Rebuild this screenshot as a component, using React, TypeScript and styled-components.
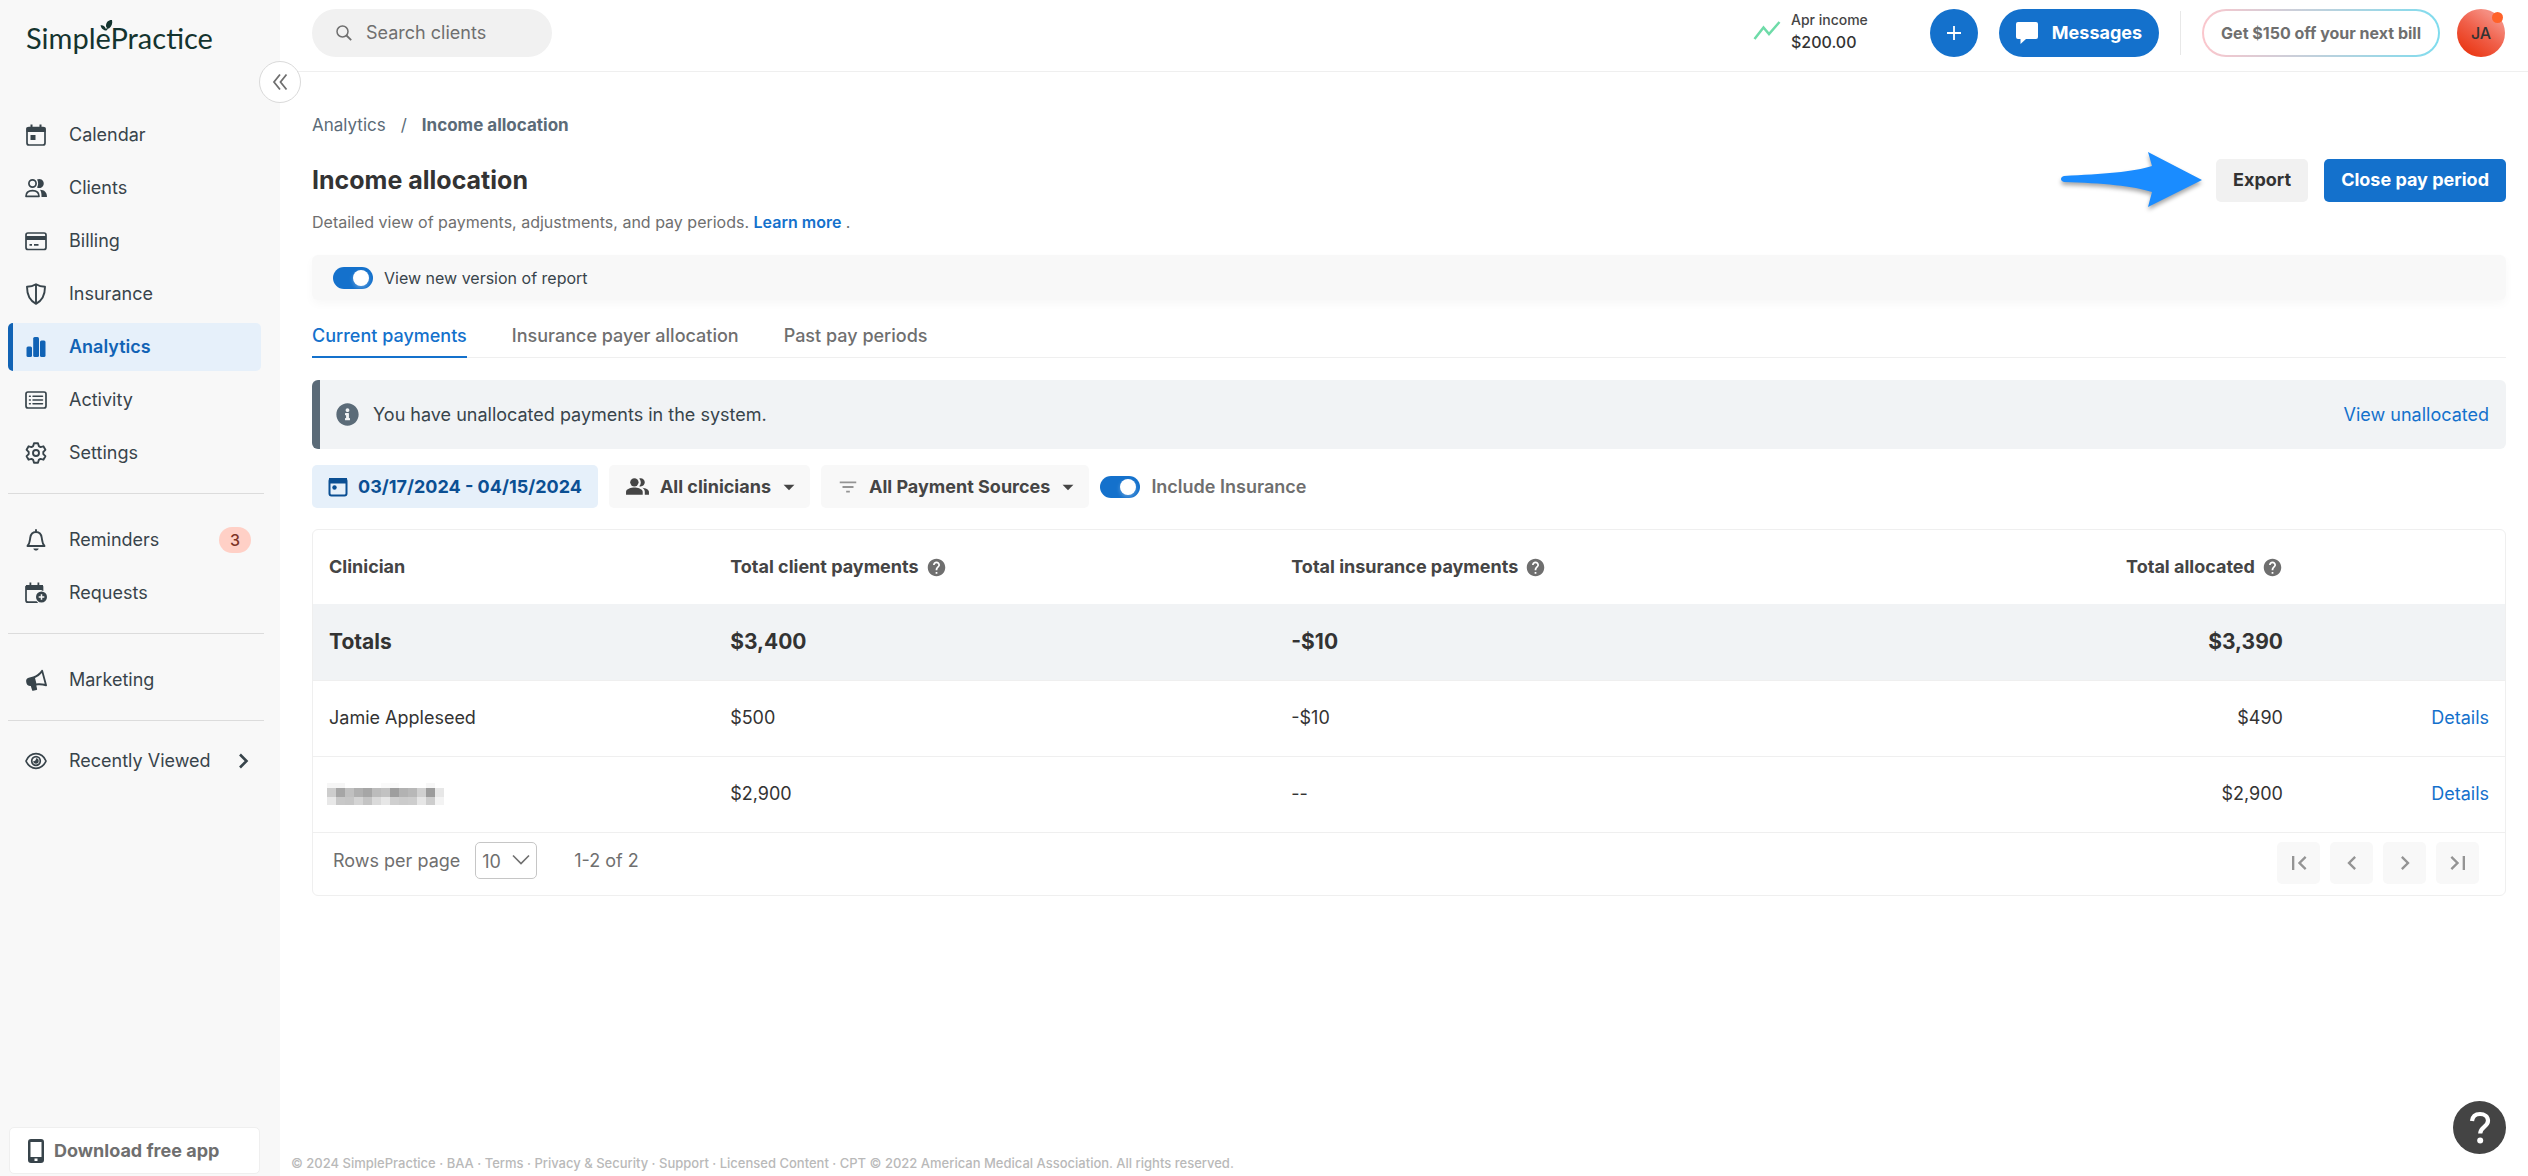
import React from "react";
import styled, { createGlobalStyle, css } from "styled-components";
import {
  MdArrowDropDown,
  MdChevronLeft,
  MdChevronRight,
  MdFilterList,
  MdFirstPage,
  MdHelp,
  MdLastPage,
  MdPeopleAlt,
} from "react-icons/md";
import { FaInfoCircle } from "react-icons/fa";

const c = {
  blue: "#1471cc",
  navy: "#0b4f93",
  ink: "#333333",
  text: "#454545",
  muted: "#6f6f6f",
  slate: "#38444b",
  slateMid: "#5b6b78",
  line: "#efefef",
  panel: "#f8f8f8",
  tint: "#e6f0fa",
  cool: "#f1f3f5",
};

const GlobalStyle = createGlobalStyle`
  *, *::before, *::after { box-sizing: border-box; }
  body { margin: 0; background: #fff; color: ${c.ink}; font: 400 18px/24px Inter, "Liberation Sans", sans-serif; }
  button, input, select { font: inherit; color: inherit; }
  button { border: 0; padding: 0; cursor: pointer; }
  a { color: ${c.blue}; text-decoration: none; }
  h1, p, ul { margin: 0; padding: 0; }
  svg { display: block; flex: none; }
`;

/* ---------- shell ---------- */

const Shell = styled.div`
  display: grid;
  grid-template-columns: 280px minmax(0, 1fr);
  min-height: 100vh;
`;

const Sidebar = styled.aside`
  position: relative;
  display: flex;
  flex-direction: column;
  padding: 20px 16px 2px 8px;
  background: ${c.panel};
`;

const Logo = styled.a`
  position: relative;
  display: block;
  height: 91px;
  padding-left: 18px;
  color: #14342f;
  font: 400 29px/36px Lato, "Open Sans", sans-serif;
`;

const LogoLeaf = styled.svg`
  position: absolute;
  left: 91px;
  top: -1px;
`;

const Collapse = styled.button`
  position: absolute;
  right: -21px;
  top: 61px;
  display: grid;
  place-items: center;
  width: 42px;
  height: 42px;
  border: 1px solid #dadada;
  border-radius: 50%;
  background: #fff;
  color: ${c.muted};
`;

const NavList = styled.ul`
  display: grid;
  gap: 5px;
  padding-right: 3px;
  list-style: none;
`;

const NavRule = styled.hr`
  width: 100%;
  height: 1px;
  margin: 16px 0 22px;
  border: 0;
  background: #dcdcdc;
`;

const rowStyles = css`
  display: flex;
  align-items: center;
  gap: 22px;
  width: 100%;
  padding: 0 10px 0 12px;
  border-left: 5px solid transparent;
  background: transparent;
  color: ${c.slate};
  text-align: left;
`;

const NavLink = styled.a<{ $active?: boolean }>`
  ${rowStyles}
  height: 48px;
  ${(p) =>
    p.$active &&
    css`
      border-radius: 5px;
      border-left-color: #1163b5;
      background: ${c.tint};
      color: #1163b5;
      font-weight: 600;
    `}
`;

const RecentButton = styled.button`
  ${rowStyles}
  height: 36px;
  padding-right: 14px;
`;

const NavText = styled.span`
  flex: 1;
  white-space: nowrap;
`;

const Badge = styled.span`
  width: 32px;
  border-radius: 13px;
  background: #ffd0c6;
  color: #7d3527;
  font-size: 16px;
  font-weight: 500;
  line-height: 26px;
  text-align: center;
`;

const Download = styled.a`
  display: flex;
  align-items: center;
  gap: 10px;
  height: 47px;
  margin: auto 4px 0 1px;
  padding: 0 18px;
  border: 1px solid #efefef;
  border-radius: 5px;
  background: #fff;
  color: ${c.muted};
  font-weight: 700;
  white-space: nowrap;
`;

/* ---------- header ---------- */

const Column = styled.div`
  display: flex;
  flex-direction: column;
  min-width: 0;
`;

const TopBar = styled.header`
  display: flex;
  align-items: center;
  height: 72px;
  padding: 0 23px 6px 32px;
  border-bottom: 1px solid ${c.line};
`;

const Search = styled.label`
  display: flex;
  align-items: center;
  gap: 12px;
  width: 240px;
  height: 48px;
  padding: 0 24px;
  border-radius: 24px;
  background: #f1f1f1;
  color: ${c.muted};
`;

const SearchInput = styled.input`
  min-width: 0;
  width: 100%;
  border: 0;
  outline: 0;
  background: transparent;

  &::placeholder {
    color: ${c.muted};
    opacity: 1;
  }
`;

const Income = styled.div`
  display: flex;
  align-items: center;
  gap: 10px;
  margin: 0 62px 4px auto;
  font-size: 16px;
  font-weight: 500;
  line-height: 22px;
  white-space: nowrap;
`;

const IncomeLabel = styled.div`
  color: ${c.text};
  font-size: 14px;
`;

const RoundButton = styled.button`
  display: grid;
  place-items: center;
  width: 48px;
  height: 48px;
  border-radius: 50%;
  background: ${c.blue};
  color: #fff;
`;

const Messages = styled.button`
  display: flex;
  align-items: center;
  gap: 14px;
  height: 48px;
  margin-left: 21px;
  padding: 0 17px;
  border-radius: 24px;
  background: ${c.blue};
  color: #fff;
  font-weight: 700;
`;

const Separator = styled.span`
  width: 1px;
  height: 44px;
  margin: 0 21px;
  background: #e8e8e8;
`;

const Promo = styled.button`
  height: 48px;
  padding: 0 17px;
  border: 2px solid transparent;
  border-radius: 24px;
  background: linear-gradient(#fff, #fff) padding-box,
    linear-gradient(90deg, #fbc6cc, #7fdcee) border-box;
  color: ${c.muted};
  font-size: 16px;
  font-weight: 700;
  white-space: nowrap;
`;

const Avatar = styled.button`
  position: relative;
  width: 48px;
  height: 48px;
  margin-left: 17px;
  border-radius: 50%;
  background: linear-gradient(215deg, #f58d80 20%, #f0604a 50%, #ea3a18 85%);
  font-size: 16px;
  font-weight: 500;
`;

const AvatarDot = styled.span`
  position: absolute;
  top: 3px;
  right: 2px;
  width: 11px;
  height: 11px;
  border-radius: 50%;
  background: #ff6229;
`;

/* ---------- page ---------- */

const Main = styled.main`
  padding: 41px 22px 24px 32px;
`;

const Crumbs = styled.nav`
  display: flex;
  gap: 15px;
  color: ${c.slateMid};
  font-size: 17px;

  a {
    color: ${c.slateMid};
  }

  b {
    font-weight: 700;
  }
`;

const TitleRow = styled.div`
  display: flex;
  align-items: center;
  height: 56px;
  margin-top: 15px;
`;

const Title = styled.h1`
  flex: 1;
  font-size: 25px;
  font-weight: 700;
  line-height: 32px;
`;

const Action = styled.button<{ $primary?: boolean }>`
  height: 43px;
  margin-left: 16px;
  padding: 0 17px;
  border-radius: 5px;
  background: ${(p) => (p.$primary ? c.blue : "#f1f1f1")};
  color: ${(p) => (p.$primary ? "#fff" : c.ink)};
  font-weight: 700;
  white-space: nowrap;
`;

const Pointer = styled.svg`
  margin-right: -4px;
  filter: drop-shadow(0 3px 2px rgba(0, 0, 0, 0.35));
`;

const Lead = styled.p`
  margin-top: 2px;
  color: ${c.muted};
  font-size: 16px;

  a {
    font-weight: 600;
  }
`;

const VersionBar = styled.div`
  display: flex;
  align-items: center;
  height: 45px;
  margin-top: 21px;
  padding: 0 21px;
  border-radius: 6px;
  background: ${c.panel};
  box-shadow: 0 4px 10px rgba(0, 0, 0, 0.03);
`;

const SwitchLabel = styled.label<{ $strong?: boolean }>`
  display: flex;
  align-items: center;
  gap: 11px;
  color: ${(p) => (p.$strong ? c.muted : c.slate)};
  font-size: ${(p) => (p.$strong ? 18 : 16)}px;
  font-weight: ${(p) => (p.$strong ? 600 : 400)};
  white-space: nowrap;
`;

const Switch = styled.input`
  appearance: none;
  width: 40px;
  height: 22px;
  margin: 0;
  padding: 3px 4px;
  border-radius: 11px;
  background: #bbb;

  &:checked {
    background: ${c.blue};
  }

  &::before {
    content: "";
    display: block;
    width: 16px;
    height: 16px;
    border-radius: 50%;
    background: #fff;
    box-shadow: 0 2px 4px rgba(255, 255, 255, 0.3);
  }

  &:checked::before {
    margin-left: auto;
  }
`;

const Tabs = styled.div`
  display: flex;
  gap: 45px;
  height: 46px;
  margin-top: 12px;
  border-bottom: 1px solid ${c.line};
`;

const Tab = styled.button<{ $active?: boolean }>`
  height: 46px;
  padding-top: 4px;
  border-bottom: 2px solid ${(p) => (p.$active ? c.blue : "transparent")};
  background: transparent;
  color: ${(p) => (p.$active ? c.blue : c.muted)};
  font-weight: 500;
  white-space: nowrap;
`;

const Notice = styled.div`
  display: flex;
  align-items: center;
  gap: 14px;
  height: 69px;
  margin-top: 22px;
  padding: 0 17px 0 16px;
  border-left: 8px solid ${c.slateMid};
  border-radius: 6px;
  background: ${c.cool};
  color: ${c.slate};

  svg {
    color: ${c.slateMid};
  }

  p {
    flex: 1;
  }
`;

const Filters = styled.div`
  display: flex;
  align-items: center;
  gap: 11px;
  margin: 16px 0 21px;
`;

const Filter = styled.button<{ $date?: boolean }>`
  display: flex;
  align-items: center;
  gap: 10px;
  height: 43px;
  padding: 0 16px;
  border-radius: 5px;
  background: ${(p) => (p.$date ? c.tint : c.panel)};
  color: ${(p) => (p.$date ? c.navy : c.text)};
  font-weight: 700;
  white-space: nowrap;
`;

const Caret = styled(MdArrowDropDown)`
  margin: 0 -8px 0 -5px;
`;

/* ---------- table ---------- */

const Card = styled.section`
  border: 1px solid ${c.line};
  border-radius: 6px;
  overflow: hidden;
`;

const Grid = styled.table`
  width: 100%;
  border-collapse: collapse;
  table-layout: fixed;
`;

const cell = css<{ $right?: boolean }>`
  padding: 0 16px;
  text-align: ${(p) => (p.$right ? "right" : "left")};
  white-space: nowrap;
`;

const Th = styled.th<{ $right?: boolean }>`
  ${cell}
  height: 74px;
  color: ${c.text};
  font-weight: 700;
`;

const HeadLabel = styled.span`
  display: inline-flex;
  align-items: center;
  gap: 7px;

  svg {
    color: ${c.muted};
  }
`;

const Td = styled.td<{ $right?: boolean }>`
  ${cell}
`;

const Row = styled.tr<{ $total?: boolean }>`
  height: 76px;
  border-bottom: 1px solid ${c.line};
  ${(p) =>
    p.$total &&
    css`
      background: ${c.cool};
      font-size: 21px;
      font-weight: 700;
    `}
`;

const Mosaic = styled.div`
  display: grid;
  grid-template-columns: repeat(13, 9px);
  grid-template-rows: 5px 9px 8px;
  margin-left: -2px;
`;

const Tile = styled.span<{ $tone: number }>`
  background: rgb(${(p) => `${p.$tone}, ${p.$tone}, ${p.$tone}`});
`;

const Pager = styled.div`
  display: flex;
  align-items: flex-start;
  height: 62px;
  padding: 9px 26px 0 20px;
  color: ${c.muted};
  line-height: 37px;
`;

const SelectBox = styled.span`
  position: relative;
  margin: 0 37px 0 15px;

  svg {
    position: absolute;
    right: 7px;
    top: 12px;
    pointer-events: none;
  }
`;

const Select = styled.select`
  appearance: none;
  display: block;
  width: 62px;
  height: 37px;
  padding: 0 6px;
  border: 1px solid #c6c6c6;
  border-radius: 5px;
  background: #fff;
`;

const PageButtons = styled.div`
  display: flex;
  gap: 10px;
  margin-left: auto;
`;

const PageButton = styled.button`
  display: grid;
  place-items: center;
  width: 43px;
  height: 42px;
  border-radius: 5px;
  background: ${c.panel};
  color: #949494;
`;

/* ---------- footer ---------- */

const Footer = styled.footer`
  margin-top: auto;
  padding: 0 12px 3px 11px;
  color: #b9b9b9;
  font-size: 13px;
  font-weight: 500;
  line-height: 20px;

  a {
    color: inherit;
  }
`;

const HelpButton = styled.button`
  position: fixed;
  right: 22px;
  bottom: 22px;
  display: grid;
  place-items: center;
  width: 53px;
  height: 53px;
  border-radius: 50%;
  background: #444;
  color: #fff;
`;

/* ---------- icons ---------- */

const stroke = { fill: "none", stroke: "currentColor", strokeWidth: 1.7, strokeLinejoin: "round" as const, strokeLinecap: "round" as const };

const Icon = ({ children, size = 22 }: { children: React.ReactNode; size?: number }) => (
  <svg width={size} height={size} viewBox="0 0 22 22" aria-hidden="true">
    {children}
  </svg>
);

const CalendarIcon = () => (
  <Icon>
    <rect x="2" y="3.5" width="18" height="17.5" rx="2" {...stroke} />
    <path d="M1.500 3.500h19V8h-19zM5.500.5h2v4h-2zM14.500.5h2v4h-2zM5.500 11h5v5h-5z" fill="currentColor" />
  </Icon>
);

const ClientsIcon = () => (
  <Icon>
    <circle cx="7.5" cy="6.5" r="3.6" {...stroke} />
    <path d="M1 19.3c0-4 2.500-5.700 6.500-5.700s6.500 1.700 6.500 5.700z" {...stroke} />
    <path d="M12 2.600a4.500 4.500 0 1 1 0 7.800c1.500-2.300 1.500-5.500 0-7.800zM15 12.800c4.500.2 7 2.400 7 7.300h-5.500c.1-3-.3-5.500-1.500-7.300z" fill="currentColor" />
  </Icon>
);

const BillingIcon = () => (
  <Icon>
    <rect x="1" y="3" width="20" height="16.500" rx="2" {...stroke} />
    <path d="M1 6h20v4H1zM4.500 14h2.500v1.700H4.500zM9 14h4.500v1.700H9z" fill="currentColor" />
  </Icon>
);

const ShieldIcon = () => (
  <Icon>
    <path d="M11 1.200c3 1.900 6 2.600 9 2.600 0 8-2 13.500-9 17-7-3.500-9-9-9-17 3 0 6-.7 9-2.600zM11 1.200v19.600" {...stroke} strokeWidth={1.9} />
  </Icon>
);

const AnalyticsIcon = () => (
  <Icon>
    <rect x="1.500" y="10.500" width="5.500" height="10.500" rx="1.500" fill="currentColor" />
    <rect x="8.200" y="1" width="5.800" height="20" rx="1.500" fill="currentColor" />
    <rect x="15" y="4.500" width="5.500" height="16.500" rx="1.500" fill="currentColor" />
  </Icon>
);

const ActivityIcon = () => (
  <Icon>
    <rect x="1" y="3" width="20" height="16" rx="2" {...stroke} />
    <path d="M4.500 7.200h.8M4.500 11h.8M4.500 14.800h.8M8 7.200h9.500M8 11h9.500M8 14.800h9.500" {...stroke} strokeWidth={1.5} />
  </Icon>
);

const SettingsIcon = () => (
  <Icon>
    <circle cx="11" cy="11" r="3" {...stroke} strokeWidth={1.9} />
    <path
      d="M9 1.200h4l.8 2.900 1.700 1 2.900-.8 2 3.500-2.100 2.100v2.200l2.100 2.100-2 3.500-2.900-.8-1.700 1-.8 2.900H9l-.8-2.900-1.700-1-2.900.8-2-3.500 2.100-2.100V9.900L1.600 7.800l2-3.500 2.900.8 1.700-1z"
      {...stroke}
      strokeWidth={1.9}
    />
  </Icon>
);

const BellIcon = () => (
  <Icon>
    <path d="M11 1v1.500M2.500 17c2.200-2.200 2.300-5 2.700-8C5.700 5 8 3 11 3s5.300 2 5.800 6c.4 3 .5 5.800 2.700 8z" {...stroke} strokeWidth={1.9} />
    <path d="M8.300 19.500h5.400c-.5 1.400-1.400 2-2.700 2s-2.200-.6-2.700-2z" fill="currentColor" />
  </Icon>
);

const RequestsIcon = () => (
  <Icon>
    <path d="M12 20.200H3a2 2 0 0 1-2-2V4.500h16.500V9" {...stroke} />
    <path d="M1 3h17v5H1zM4.500.5h1.800v4H4.500zM12.500.5h1.800v4h-1.800z" fill="currentColor" />
    <circle cx="16.500" cy="15" r="6.400" fill={c.panel} />
    <circle cx="16.500" cy="15" r="5.500" fill="currentColor" />
    <path d="M16.500 12.200v5.600M13.700 15h5.600" stroke={c.panel} strokeWidth="1.500" />
  </Icon>
);

const MegaphoneIcon = () => (
  <Icon>
    <path
      fillRule="evenodd"
      d="M16.600.9c.6-.4 1.200-.1 1.400.5l4 14.800c.1.700-.4 1.200-1.100 1-3.300-.9-6.400-1.200-9.600-.6l.8 3.300c.1.500-.1.900-.6 1l-3.400.9c-.5.1-.9-.1-1-.6l-1.300-4.300c-2 .3-3.700-.6-4.300-2.600-.8-2.800-.4-4.800 2.200-5.600l4.500-1.200C11.500 6.300 14.300 3.900 16.600.9zm.2 3.200c-1.900 2.200-4.200 3.800-6.800 5l1.400 5.300c2.800-.4 5.500-.3 8.300.4z"
      fill="currentColor"
    />
  </Icon>
);

const EyeIcon = () => (
  <Icon>
    <path d="M1 11c2.200-5 5.700-7.300 10-7.300S18.800 6 21 11c-2.200 5-5.700 7.300-10 7.300S3.200 16 1 11z" {...stroke} />
    <circle cx="11" cy="11" r="4.300" {...stroke} />
    <path d="M11 8.300a2.700 2.700 0 1 1-2.700 2.700c1.500.6 3-.8 2.700-2.700z" fill="currentColor" />
  </Icon>
);

const DateIcon = () => (
  <svg width="20" height="20" viewBox="0 0 20 20" aria-hidden="true">
    <rect x="1.500" y="2" width="17" height="16.500" rx="2" fill="none" stroke="currentColor" strokeWidth="2" />
    <path d="M1 1h18v5.500H1z" fill="currentColor" />
    <circle cx="6.500" cy="10.500" r="2.200" fill="currentColor" />
  </svg>
);

/* ---------- content ---------- */

type NavEntry = { label: string; icon: React.ReactNode; active?: boolean; badge?: number };

const groups: NavEntry[][] = [
  [
    { label: "Calendar", icon: <CalendarIcon /> },
    { label: "Clients", icon: <ClientsIcon /> },
    { label: "Billing", icon: <BillingIcon /> },
    { label: "Insurance", icon: <ShieldIcon /> },
    { label: "Analytics", icon: <AnalyticsIcon />, active: true },
    { label: "Activity", icon: <ActivityIcon /> },
    { label: "Settings", icon: <SettingsIcon /> },
  ],
  [
    { label: "Reminders", icon: <BellIcon />, badge: 3 },
    { label: "Requests", icon: <RequestsIcon /> },
  ],
  [{ label: "Marketing", icon: <MegaphoneIcon /> }],
];

const tiles = [
  246, 246, 255, 255, 255, 255, 250, 250, 255, 255, 255, 247, 255,
  205, 166, 192, 176, 166, 188, 194, 158, 178, 184, 208, 156, 231,
  232, 200, 198, 212, 196, 218, 231, 207, 203, 205, 230, 205, 243,
];

const footerLinks = ["BAA", "Terms", "Privacy & Security", "Support", "Licensed Content"];

const HeadCell = ({ label, right }: { label: string; right?: boolean }) => (
  <Th scope="col" $right={right}>
    <HeadLabel>
      {label}
      <MdHelp size={21} aria-hidden="true" />
    </HeadLabel>
  </Th>
);

export default function App() {
  return (
    <>
      <GlobalStyle />
      <Shell>
        <Sidebar>
          <Logo href="#home">
            SimplePractice
            <LogoLeaf width="16" height="14" viewBox="0 0 14 14" aria-hidden="true">
              <path d="M6 7C6 3 8.500.8 12 1c.8 3.500-.3 6.500-3 8.500C7 9.300 6.200 8.500 6 7zM.5 6.200c2.800-.3 4.600.8 5.200 3.800l-1 1.200C2.500 10.500 1 8.800.5 6.200zM5 10l4-1.500-2.500 3H4.500z" fill="#14342f" />
            </LogoLeaf>
          </Logo>
          <Collapse aria-label="Collapse menu">
            <svg width="16" height="18" viewBox="0 0 16 18" aria-hidden="true">
              <path d="M8 1.500L2 9l6 7.500M14.500 1.500L8.500 9l6 7.500" fill="none" stroke="currentColor" strokeWidth="1.800" />
            </svg>
          </Collapse>
          {groups.map((group, i) => (
            <React.Fragment key={i}>
              <NavList>
                {group.map((n) => (
                  <li key={n.label}>
                    <NavLink href={`#${n.label.toLowerCase()}`} $active={n.active}>
                      {n.icon}
                      <NavText>{n.label}</NavText>
                      {n.badge && <Badge>{n.badge}</Badge>}
                    </NavLink>
                  </li>
                ))}
              </NavList>
              <NavRule />
            </React.Fragment>
          ))}
          <RecentButton>
            <EyeIcon />
            <NavText>Recently Viewed</NavText>
            <svg width="12" height="16" viewBox="0 0 12 16" aria-hidden="true">
              <path d="M2 1.500L8.500 8 2 14.500" fill="none" stroke="currentColor" strokeWidth="2.600" />
            </svg>
          </RecentButton>
          <Download href="#app">
            <svg width="16" height="24" viewBox="0 0 16 24" aria-hidden="true">
              <path fillRule="evenodd" d="M3 0h10a3 3 0 0 1 3 3v18a3 3 0 0 1-3 3H3a3 3 0 0 1-3-3V3a3 3 0 0 1 3-3zM2.500 3v15h11V3zM6.500 19.500v2.500h3v-2.500z" fill={c.slate} />
            </svg>
            Download free app
          </Download>
        </Sidebar>

        <Column>
          <TopBar>
            <Search>
              <svg width="16" height="16" viewBox="0 0 16 16" aria-hidden="true">
                <circle cx="6.500" cy="6.500" r="5.500" fill="none" stroke="currentColor" strokeWidth="1.500" />
                <path d="M10.500 10.500L15.200 15.200" stroke="currentColor" strokeWidth="1.800" />
              </svg>
              <SearchInput type="search" aria-label="Search clients" placeholder="Search clients" />
            </Search>
            <Income>
              <svg width="28" height="20" viewBox="0 0 28 20" aria-hidden="true">
                <path d="M1.500 18L10.500 6.500 16 13 26.500 1" fill="none" stroke="#6edba8" strokeWidth="2.500" />
              </svg>
              <div>
                <IncomeLabel>Apr income</IncomeLabel>
                $200.00
              </div>
            </Income>
            <RoundButton aria-label="Create">
              <svg width="14" height="14" viewBox="0 0 14 14" aria-hidden="true">
                <path d="M7 0v14M0 7h14" stroke="currentColor" strokeWidth="1.800" />
              </svg>
            </RoundButton>
            <Messages>
              <svg width="22" height="22" viewBox="0 0 22 22" aria-hidden="true">
                <path d="M2 0h18a2 2 0 0 1 2 2v13a2 2 0 0 1-2 2H10l-5.500 5V17H2a2 2 0 0 1-2-2V2a2 2 0 0 1 2-2z" fill="currentColor" />
              </svg>
              Messages
            </Messages>
            <Separator />
            <Promo>Get $150 off your next bill</Promo>
            <Avatar>
              JA
              <AvatarDot />
            </Avatar>
          </TopBar>

          <Main>
            <Crumbs aria-label="Breadcrumb">
              <a href="#analytics">Analytics</a>
              <span>/</span>
              <b>Income allocation</b>
            </Crumbs>
            <TitleRow>
              <Title>Income allocation</Title>
              <Pointer width="144" height="56" viewBox="0 0 144 56" aria-hidden="true">
                <path d="M4 24C42 22 74 20 92 14L88 0 142 28 88 55l4-15C74 34 42 31 4 30c-4-1-4-5 0-6z" fill="#1a8cff" />
              </Pointer>
              <Action>Export</Action>
              <Action $primary>Close pay period</Action>
            </TitleRow>
            <Lead>
              Detailed view of payments, adjustments, and pay periods. <a href="#learn">Learn more</a> .
            </Lead>
            <VersionBar>
              <SwitchLabel>
                <Switch type="checkbox" defaultChecked />
                View new version of report
              </SwitchLabel>
            </VersionBar>
            <Tabs role="tablist">
              <Tab role="tab" aria-selected="true" $active>
                Current payments
              </Tab>
              <Tab role="tab" aria-selected="false">Insurance payer allocation</Tab>
              <Tab role="tab" aria-selected="false">Past pay periods</Tab>
            </Tabs>
            <Notice>
              <FaInfoCircle size={23} aria-hidden="true" />
              <p>You have unallocated payments in the system.</p>
              <a href="#unallocated">View unallocated</a>
            </Notice>
            <Filters>
              <Filter $date>
                <DateIcon />
                03/17/2024 - 04/15/2024
              </Filter>
              <Filter>
                <MdPeopleAlt size={25} aria-hidden="true" />
                All clinicians
                <Caret size={26} aria-hidden="true" />
              </Filter>
              <Filter>
                <MdFilterList size={22} color="#949494" aria-hidden="true" />
                All Payment Sources
                <Caret size={26} aria-hidden="true" />
              </Filter>
              <SwitchLabel $strong>
                <Switch type="checkbox" defaultChecked />
                Include Insurance
              </SwitchLabel>
            </Filters>
            <Card>
              <Grid>
                <colgroup>
                  <col width="18.3%" />
                  <col width="25.6%" />
                  <col width="25.6%" />
                  <col />
                  <col width="9.4%" />
                </colgroup>
                <thead>
                  <tr>
                    <Th scope="col">Clinician</Th>
                    <HeadCell label="Total client payments" />
                    <HeadCell label="Total insurance payments" />
                    <HeadCell label="Total allocated" right />
                    <Th aria-label="Actions" />
                  </tr>
                </thead>
                <tbody>
                  <Row $total>
                    <Td>Totals</Td>
                    <Td>$3,400</Td>
                    <Td>-$10</Td>
                    <Td $right>$3,390</Td>
                    <Td />
                  </Row>
                  <Row>
                    <Td>Jamie Appleseed</Td>
                    <Td>$500</Td>
                    <Td>-$10</Td>
                    <Td $right>$490</Td>
                    <Td $right>
                      <a href="#details-1">Details</a>
                    </Td>
                  </Row>
                  <Row>
                    <Td>
                      <Mosaic>
                        {tiles.map((tone, i) => (
                          <Tile key={i} $tone={tone} />
                        ))}
                      </Mosaic>
                    </Td>
                    <Td>$2,900</Td>
                    <Td>--</Td>
                    <Td $right>$2,900</Td>
                    <Td $right>
                      <a href="#details-2">Details</a>
                    </Td>
                  </Row>
                </tbody>
              </Grid>
              <Pager>
                <label htmlFor="rows">Rows per page</label>
                <SelectBox>
                  <Select id="rows" defaultValue="10">
                    <option>10</option>
                    <option>25</option>
                    <option>50</option>
                  </Select>
                  <svg width="18" height="12" viewBox="0 0 18 12" aria-hidden="true">
                    <path d="M1 1.500l8 8 8-8" fill="none" stroke="currentColor" strokeWidth="1.600" />
                  </svg>
                </SelectBox>
                <span>1-2 of 2</span>
                <PageButtons>
                  <PageButton aria-label="First page">
                    <MdFirstPage size={28} />
                  </PageButton>
                  <PageButton aria-label="Previous page">
                    <MdChevronLeft size={28} />
                  </PageButton>
                  <PageButton aria-label="Next page">
                    <MdChevronRight size={28} />
                  </PageButton>
                  <PageButton aria-label="Last page">
                    <MdLastPage size={28} />
                  </PageButton>
                </PageButtons>
              </Pager>
            </Card>
          </Main>

          <Footer>
            © 2024 SimplePractice
            {footerLinks.map((l) => (
              <React.Fragment key={l}>
                {" · "}
                <a href="#legal">{l}</a>
              </React.Fragment>
            ))}
            {" · CPT © 2022 American Medical Association. All rights reserved."}
          </Footer>
        </Column>
      </Shell>
      <HelpButton aria-label="Help">
        <svg width="24" height="34" viewBox="0 0 24 34" aria-hidden="true">
          <path d="M4 10c.5-4.500 3.500-7 8-7s8 2.700 8 6.800c0 6.200-7.800 6-7.800 12.700" fill="none" stroke="currentColor" strokeWidth="4.200" />
          <circle cx="12.200" cy="29.500" r="3" fill="currentColor" />
        </svg>
      </HelpButton>
    </>
  );
}
